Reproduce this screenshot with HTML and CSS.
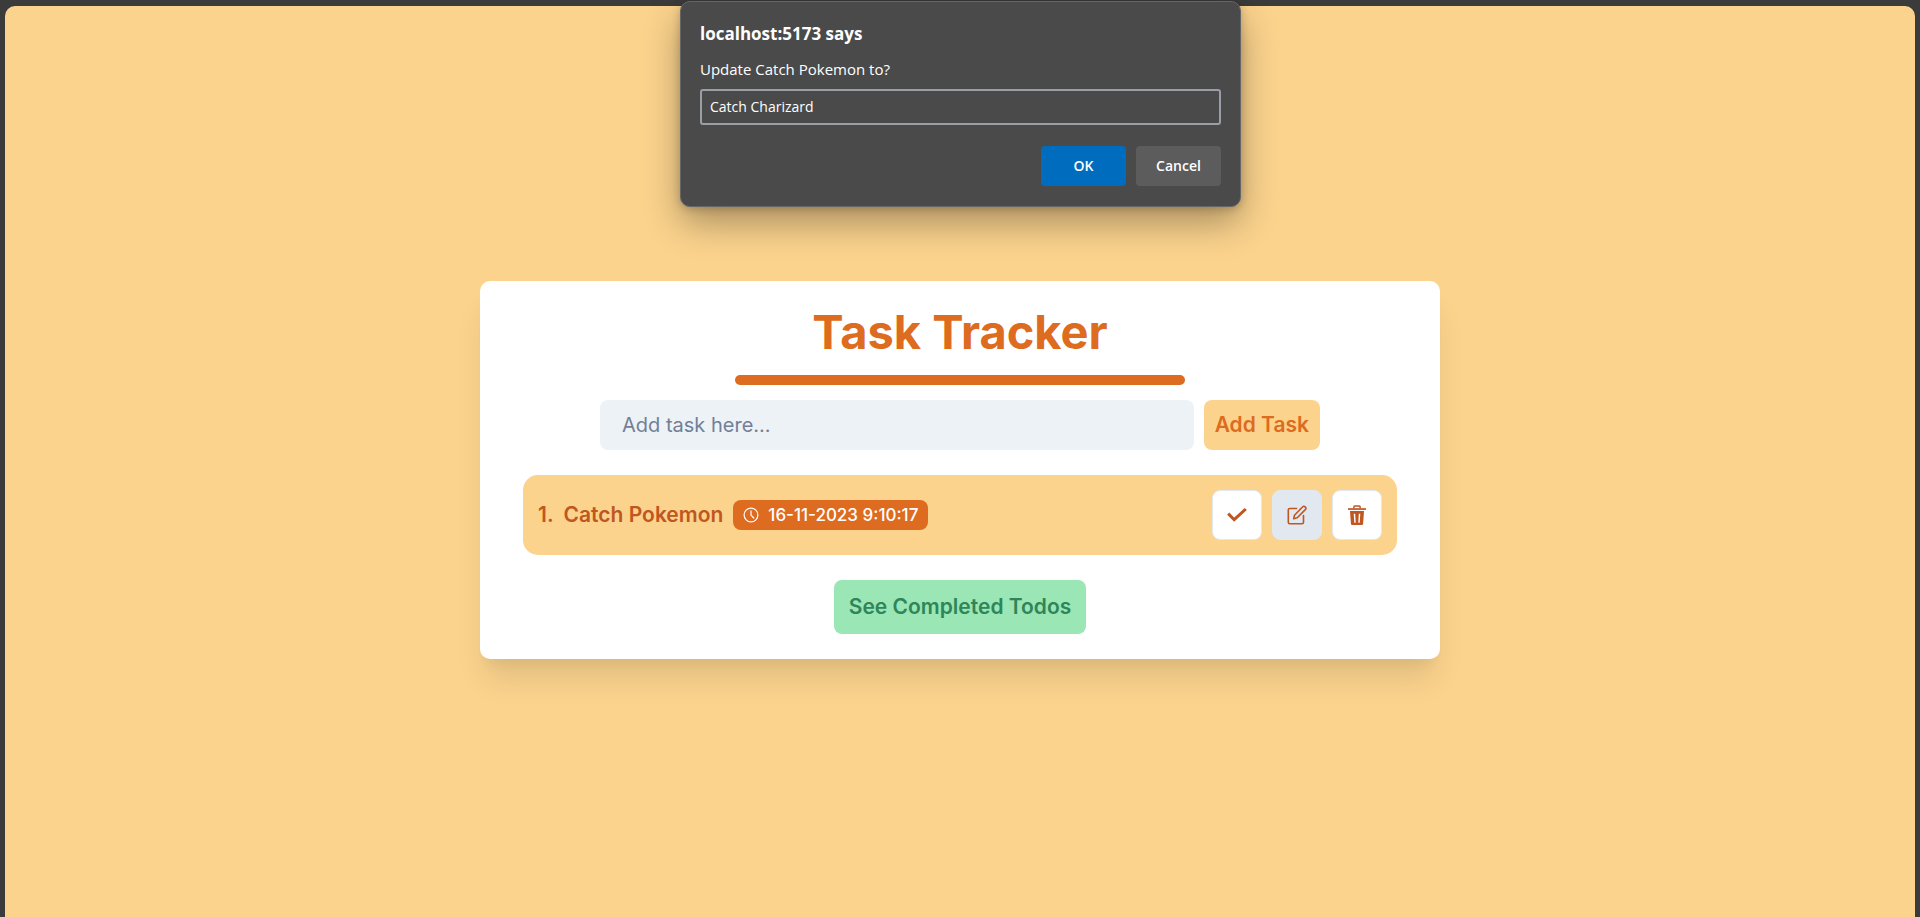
FILE: index.html
```html
<!DOCTYPE html>
<html lang="en">
<head>
<meta charset="utf-8">
<title>Task Tracker</title>
<link rel="stylesheet" href="styles.css">
</head>
<body>
<div class="page">
  <main class="card">
    <h1 class="title">Task Tracker</h1>
    <div class="bar"></div>
    <form class="add-form">
      <input class="add-input" type="text" placeholder="Add task here..." aria-label="New task">
      <button class="add-button" type="button">Add Task</button>
    </form>
    <ul class="tasks">
      <li class="task">
        <span class="task-index">1.</span>
        <span class="task-name">Catch Pokemon</span>
        <span class="badge">
          <svg width="16" height="16" viewBox="0 0 16 16" fill="none" stroke="currentColor" stroke-width="1.2" stroke-linecap="round" stroke-linejoin="round" aria-hidden="true"><circle cx="8" cy="8" r="6.9"/><path d="M8 3.8V8.2L10.8 11"/></svg>
          <time>16-11-2023 9:10:17</time>
        </span>
        <div class="actions">
          <button class="icon-button" type="button" aria-label="Complete task">
            <svg width="20" height="20" viewBox="0 0 20 20" fill="none" stroke="currentColor" stroke-width="3" aria-hidden="true"><path d="M1.2 8.6L7.2 14.7L18.8 4"/></svg>
          </button>
          <button class="icon-button icon-button-active" type="button" aria-label="Edit task">
            <svg width="20" height="20" viewBox="0 0 20 20" fill="none" stroke="currentColor" stroke-width="1.6" stroke-linecap="round" stroke-linejoin="round" aria-hidden="true"><path d="M9.6 3.5H2.8A1.5 1.5 0 0 0 1.3 5V17.2A1.5 1.5 0 0 0 2.8 18.7H15A1.5 1.5 0 0 0 16.5 17.2V10.6"/><path d="M15.5 2A1.7 1.7 0 0 1 18.3 4.6L10.2 12.8L6.7 13.7L7.5 10.2Z"/></svg>
          </button>
          <button class="icon-button" type="button" aria-label="Delete task">
            <svg width="20" height="20" viewBox="0 0 20 20" aria-hidden="true"><path d="M6.9 3.4V1.7Q6.9 .9 7.7 .9H12.3Q13.1 .9 13.1 1.7V3.4" fill="none" stroke="currentColor" stroke-width="1.5"/><path d="M1 3.2H19V4.9H1Z" fill="currentColor"/><path fill="currentColor" fill-rule="evenodd" d="M3 6H17L16.1 18.7Q16 20 14.8 20H5.2Q4 20 3.9 18.7ZM6.7 8.7L7.3 17.7H8.7L8.2 8.7ZM11.8 8.7L11.3 17.7H12.7L13.3 8.7Z"/></svg>
          </button>
        </div>
      </li>
    </ul>
    <button class="completed" type="button">See Completed Todos</button>
  </main>
</div>
<dialog class="prompt" open aria-labelledby="prompt-title">
  <h2 class="prompt-title" id="prompt-title">localhost:5173 says</h2>
  <label class="prompt-label" for="prompt-input">Update Catch Pokemon to?</label>
  <input class="prompt-input" id="prompt-input" type="text" value="Catch Charizard">
  <div class="prompt-actions">
    <button class="prompt-button prompt-ok" type="button">OK</button>
    <button class="prompt-button" type="button">Cancel</button>
  </div>
</dialog>
</body>
</html>
```

FILE: styles.css
```css
* {
  box-sizing: border-box;
}

body {
  margin: 0;
  min-height: 100vh;
  display: flex;
  padding: 6px 5px 0;
  background: #3b3b3b;
  font-family: Inter, "Liberation Sans", sans-serif;
  font-size: 20px;
  line-height: 30px;
}

button,
input {
  font: inherit;
  border: 0;
  margin: 0;
}

button {
  cursor: pointer;
}

.page {
  flex: 1;
  display: flex;
  justify-content: center;
  align-items: flex-start;
  padding: 275px 20px 40px;
  border-radius: 10px 10px 0 0;
  background: #fbd38d;
}

.card {
  width: 100%;
  max-width: 960px;
  display: flex;
  flex-direction: column;
  align-items: center;
  padding: 21px 43px 25px;
  border-radius: 10px;
  background: #fff;
  box-shadow: 0 25px 31px -6px rgba(0, 0, 0, 0.1), 0 12px 12px -6px rgba(0, 0, 0, 0.04);
}

.title {
  margin: 0;
  font-size: 47px;
  font-weight: 700;
  line-height: 60px;
  color: #dd6b20;
}

.bar {
  width: 100%;
  max-width: 450px;
  height: 10px;
  margin: 13px 0 15px;
  border-radius: 5px;
  background: #dd6b20;
}

.add-form {
  width: 100%;
  max-width: 720px;
  display: flex;
  gap: 10px;
}

.add-input {
  flex: 1;
  min-width: 0;
  height: 50px;
  padding: 0 22px;
  border-radius: 8px;
  background: #edf2f7;
  color: #1a202c;
}

.add-input::placeholder {
  color: #718096;
  opacity: 1;
}

.add-button {
  padding: 0 11px;
  border-radius: 8px;
  background: #fbd38d;
  color: #dd6b20;
  font-size: 21px;
  font-weight: 600;
}

.tasks {
  width: 100%;
  margin: 25px 0;
  padding: 0;
  list-style: none;
}

.task {
  display: flex;
  align-items: center;
  gap: 10px;
  padding: 15px;
  border-radius: 15px;
  background: #fbd38d;
  color: #c05621;
  font-size: 21px;
  font-weight: 600;
}

.badge {
  display: flex;
  align-items: center;
  gap: 9px;
  padding: 0 10px;
  border-radius: 8px;
  background: #dd6b20;
  color: #fff;
  font-size: 17px;
  font-weight: 500;
}

.actions {
  display: flex;
  gap: 10px;
  margin-left: auto;
}

.icon-button {
  width: 50px;
  height: 50px;
  display: grid;
  place-items: center;
  padding: 0;
  border: 1px solid #e2e8f0;
  border-radius: 8px;
  background: #fff;
  color: #c05621;
}

.icon-button-active {
  background: #e2e8f0;
}

.completed {
  padding: 12px 15px;
  border-radius: 8px;
  background: #9ae6b4;
  color: #2f855a;
  font-size: 21px;
  font-weight: 600;
}

.prompt {
  position: absolute;
  top: 1px;
  left: 1px;
  right: 0;
  width: 561px;
  max-width: 100%;
  margin: 0 auto;
  padding: 17px 19px 20px;
  border: 1px solid #666;
  border-radius: 10px;
  background: #4a4a4a;
  color: #fff;
  box-shadow: 0 16px 36px rgba(0, 0, 0, 0.32), 0 2px 8px rgba(0, 0, 0, 0.2);
  font-family: "Open Sans", "Noto Sans", sans-serif;
  font-size: 15px;
  line-height: 30px;
}

.prompt-title {
  margin: 0 0 5px;
  font-size: 17px;
  font-weight: 700;
  line-height: 30px;
}

.prompt-label {
  display: block;
}

.prompt-input {
  display: block;
  width: 100%;
  height: 36px;
  margin: 5px 0 21px;
  padding: 0 8px 2px;
  border: 2px solid #9a9ea6;
  border-radius: 3px;
  background: transparent;
  color: #fff;
  font-size: 14px;
}

.prompt-actions {
  display: flex;
  justify-content: flex-end;
  gap: 10px;
}

.prompt-button {
  width: 85px;
  height: 40px;
  border-radius: 4px;
  background: #5c5c5c;
  color: #fff;
  font-size: 14px;
  font-weight: 600;
}

.prompt-ok {
  background: #006cbe;
}
```
